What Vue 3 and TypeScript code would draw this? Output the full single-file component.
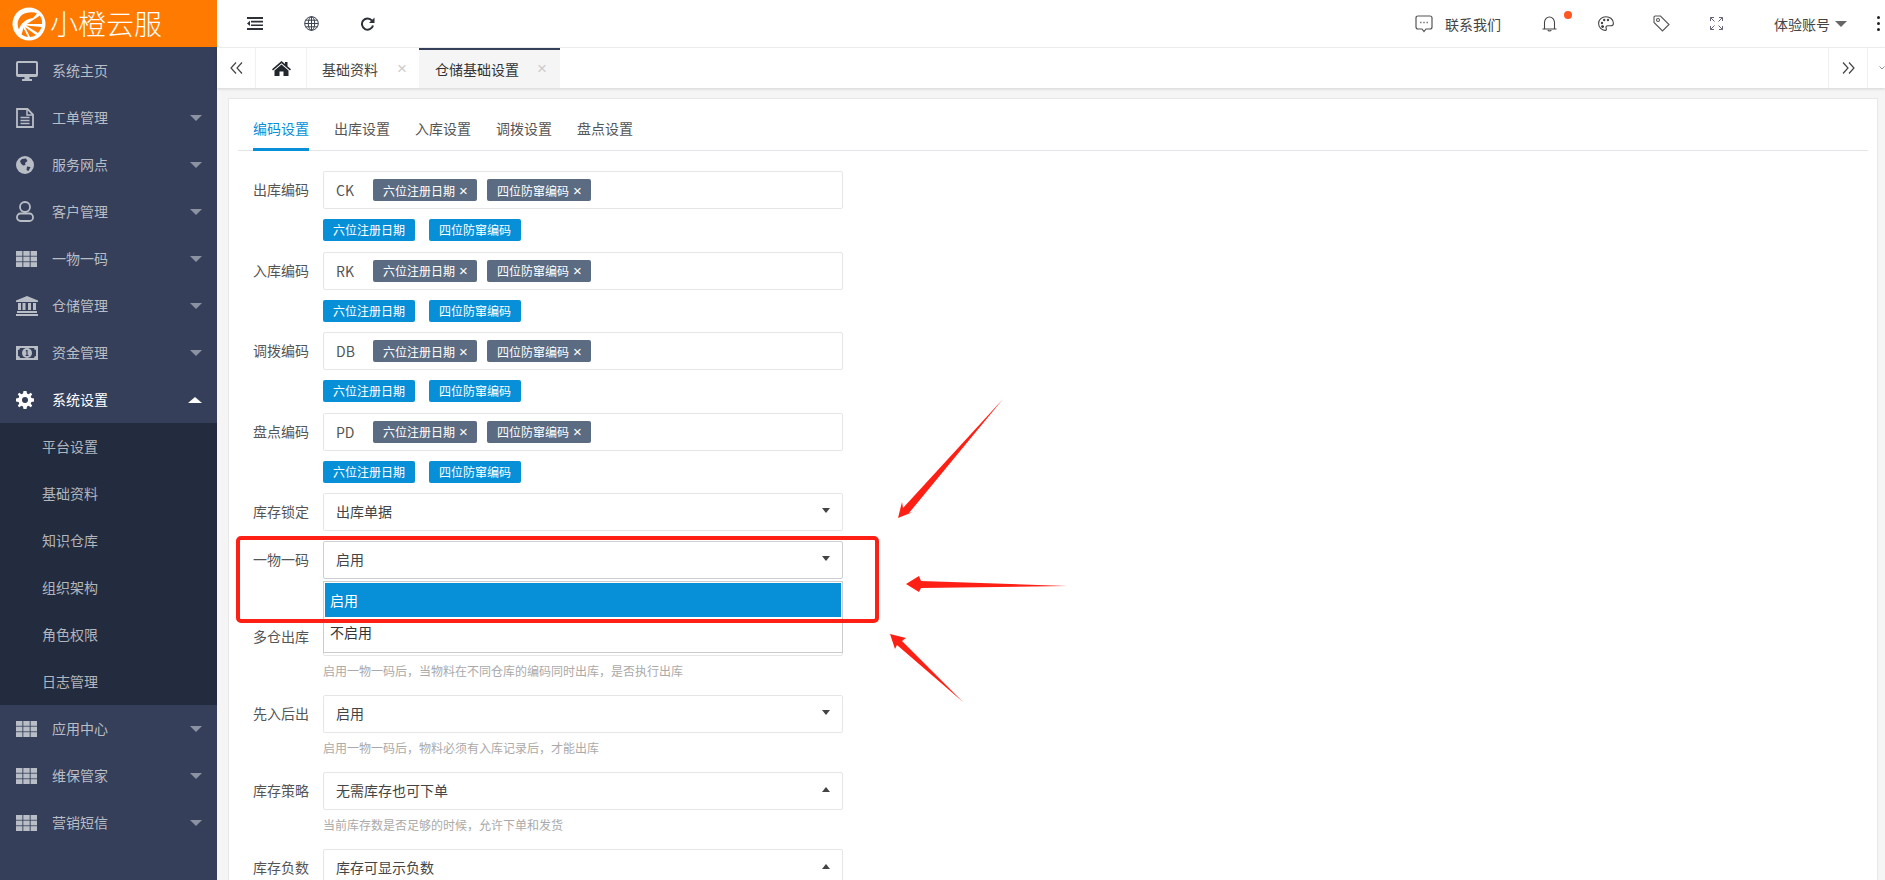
<script setup lang="ts">
interface MenuItem { label: string; icon: string; caret?: 'down' | 'up'; active?: boolean; children?: string[] }
const menu: MenuItem[] = [
  { label: '系统主页', icon: 'monitor' },
  { label: '工单管理', icon: 'doc', caret: 'down' },
  { label: '服务网点', icon: 'globe', caret: 'down' },
  { label: '客户管理', icon: 'user', caret: 'down' },
  { label: '一物一码', icon: 'grid', caret: 'down' },
  { label: '仓储管理', icon: 'bank', caret: 'down' },
  { label: '资金管理', icon: 'money', caret: 'down' },
  { label: '系统设置', icon: 'gear', caret: 'up', active: true, children: ['平台设置', '基础资料', '知识仓库', '组织架构', '角色权限', '日志管理'] },
  { label: '应用中心', icon: 'grid', caret: 'down' },
  { label: '维保管家', icon: 'grid', caret: 'down' },
  { label: '营销短信', icon: 'grid', caret: 'down' }
]
const subTabs = ['编码设置', '出库设置', '入库设置', '调拨设置', '盘点设置']
const codes = [
  { label: '出库编码', prefix: 'CK' },
  { label: '入库编码', prefix: 'RK' },
  { label: '调拨编码', prefix: 'DB' },
  { label: '盘点编码', prefix: 'PD' }
]
const gridCells: number[][] = []
for (let r = 0; r < 3; r++) for (let c = 0; c < 3; c++) gridCells.push([c * 7.3, r * 5.6])
</script>

<template>
  <div class="page">
    <aside class="side">
      <div class="logo">
        <svg class="logo-mark" width="34" height="34" viewBox="0 0 34 34">
          <circle cx="17" cy="17" r="16.5" fill="#fff" />
          <path d="M17 5.5A11.5 11.5 0 0 0 7 22.5C9 16 14 12 21 11L25 6.5A11.5 11.5 0 0 0 17 5.5Z" fill="#ff7a00" />
          <path d="M15 17 L28 8.5A13 13 0 0 1 30 17Z M14 18.5 L29.5 20A13 13 0 0 1 26 26Z M13 20 L24 28A13 13 0 0 1 18 30Z M11.5 21 L16 30A13 13 0 0 1 9.5 27.5Z" fill="#ff7a00" />
        </svg>
        <span class="logo-text">小橙云服</span>
      </div>
      <nav>
        <template v-for="item in menu" :key="item.label">
          <div class="menu-item" :class="{ active: item.active }">
            <span class="menu-icon">
              <svg v-if="item.icon === 'monitor'" width="22" height="20" viewBox="0 0 22 20">
                <path fill-rule="evenodd" d="M2 0H20Q22 0 22 2V14Q22 16 20 16H13.5V18H16V20H6V18H8.5V16H2Q0 16 0 14V2Q0 0 2 0ZM2 2V13H20V2Z" fill="currentColor" />
              </svg>
              <svg v-else-if="item.icon === 'doc'" width="18" height="20" viewBox="0 0 18 20">
                <path d="M1 1H11.5L17 6.5V19H1Z" fill="none" stroke="currentColor" stroke-width="1.8" />
                <path d="M11 1V7H17M4.5 9.5H13.5M4.5 12.5H13.5M4.5 15.5H13.5" fill="none" stroke="currentColor" stroke-width="1.5" />
              </svg>
              <svg v-else-if="item.icon === 'globe'" width="18" height="18" viewBox="0 0 18 18">
                <circle cx="9" cy="9" r="9" fill="currentColor" />
                <path d="M6 3L10 2.5 11.5 5 9 7 9.5 9 7 9.5 5 7.5 4 5ZM11 10.5L14.5 11 12.5 15 10.5 14Z" fill="#353f59" />
              </svg>
              <svg v-else-if="item.icon === 'user'" width="18" height="21" viewBox="0 0 18 21">
                <circle cx="9" cy="6" r="5" fill="none" stroke="currentColor" stroke-width="1.8" />
                <rect x="1" y="12.5" width="16" height="7.5" rx="3.5" fill="none" stroke="currentColor" stroke-width="1.8" />
              </svg>
              <svg v-else-if="item.icon === 'grid'" width="21" height="16" viewBox="0 0 21 16">
                <rect v-for="(c, i) in gridCells" :key="i" :x="c[0]" :y="c[1]" width="6.4" height="4.8" fill="currentColor" />
              </svg>
              <svg v-else-if="item.icon === 'bank'" width="22" height="20" viewBox="0 0 22 20">
                <path d="M11 0L22 4.5V6H0V4.5ZM2 7H5V14H2ZM6.5 7H9.5V14H6.5ZM12 7H15V14H12ZM17 7H20V14H17ZM1 15H21V17H1ZM0 18H22V20H0Z" fill="currentColor" />
              </svg>
              <svg v-else-if="item.icon === 'money'" width="22" height="14" viewBox="0 0 22 14">
                <path fill-rule="evenodd" d="M0 0H22V14H0ZM4 2A2 2 0 0 1 2 4V10A2 2 0 0 1 4 12H18A2 2 0 0 1 20 10V4A2 2 0 0 1 18 2Z" fill="currentColor" />
                <ellipse cx="11" cy="7" rx="5" ry="5" fill="currentColor" />
                <path d="M10 4H11.6V9H12.6V10H9.6V9H10.4V5.2H9.6Z" fill="#353f59" />
              </svg>
              <svg v-else width="18" height="18" viewBox="0 0 18 18">
                <path fill-rule="evenodd" d="M7.5 0H10.5L11 2.6 12.6 3.3 14.8 1.8 16.2 3.2 14.7 5.4 15.4 7 18 7.5V10.5L15.4 11 14.7 12.6 16.2 14.8 14.8 16.2 12.6 14.7 11 15.4 10.5 18H7.5L7 15.4 5.4 14.7 3.2 16.2 1.8 14.8 3.3 12.6 2.6 11 0 10.5V7.5L2.6 7 3.3 5.4 1.8 3.2 3.2 1.8 5.4 3.3 7 2.6ZM9 6A3 3 0 1 0 9 12 3 3 0 1 0 9 6Z" fill="currentColor" />
              </svg>
            </span>
            <span class="menu-label">{{ item.label }}</span>
            <i v-if="item.caret" class="menu-caret" :class="item.caret"></i>
          </div>
          <div v-if="item.children" class="submenu">
            <div v-for="child in item.children" :key="child" class="sub-item">{{ child }}</div>
          </div>
        </template>
      </nav>
    </aside>

    <div class="right">
      <header class="topbar">
        <div class="top-left">
          <span class="top-btn">
            <svg width="16" height="13" viewBox="0 0 16 13" fill="#2c3038">
              <path d="M0 0H16V2H0ZM4 3.8H16V5.4H4ZM4 7.4H16V9H4ZM0 11H16V13H0ZM3 3.8V9L0 6.4Z" />
            </svg>
          </span>
          <span class="top-btn">
            <svg width="15" height="15" viewBox="0 0 15 15" fill="none" stroke="#3b4252" stroke-width="1">
              <circle cx="7.5" cy="7.5" r="6.8" />
              <ellipse cx="7.5" cy="7.5" rx="3.2" ry="6.8" />
              <path d="M7.5 .7V14.3M.7 7.5H14.3M1.6 4.2H13.4M1.6 10.8H13.4" />
            </svg>
          </span>
          <span class="top-btn">
            <svg width="15" height="14" viewBox="0 0 15 14" fill="none">
              <path d="M12 3.6A5.6 5.6 0 1 0 13 8.5" stroke="#2c3038" stroke-width="2" />
              <path d="M14.5 .5V6H9Z" fill="#2c3038" />
            </svg>
          </span>
        </div>
        <div class="top-right">
          <span class="contact">
            <svg width="18" height="18" viewBox="0 0 18 18" fill="none" stroke="#555" stroke-width="1.2">
              <path d="M3 1H15Q17 1 17 3V12Q17 14 15 14H11L9 16.5 7 14H3Q1 14 1 12V3Q1 1 3 1Z" />
              <path d="M5.2 7.5H6.4M8.4 7.5H9.6M11.6 7.5H12.8" stroke-width="1.6" />
            </svg>
            <span>联系我们</span>
          </span>
          <span class="top-icon bell">
            <svg width="15" height="17" viewBox="0 0 15 17" fill="none" stroke="#444" stroke-width="1.1">
              <path d="M.5 14H14.5M2.5 14V7.5A5 5.5 0 0 1 12.5 7.5V14" />
              <path d="M5.8 15A1.8 1.6 0 0 0 9.2 15" />
            </svg>
            <i class="dot"></i>
          </span>
          <span class="top-icon">
            <svg width="16" height="15" viewBox="0 0 16 15">
              <path d="M8 .7C3.8.7.6 3.7.6 7.6S3.8 14.4 7 14.4C9 14.4 8.4 12.6 8 11.8 7.6 10.6 8.5 9.8 9.8 9.8H13C14.6 9.8 15.4 8.8 15.4 7.2 15.4 3.4 12 .7 8 .7Z" fill="none" stroke="#444" stroke-width="1.1" />
              <circle cx="4" cy="7" r="1.2" fill="#444" /><circle cx="6.2" cy="4" r="1.2" fill="#444" /><circle cx="10" cy="4" r="1.2" fill="#444" /><circle cx="4.6" cy="10.6" r="1.4" fill="#333" />
            </svg>
          </span>
          <span class="top-icon">
            <svg width="17" height="17" viewBox="0 0 17 17" fill="none" stroke="#555" stroke-width="1.1">
              <path d="M1 2.2Q1 1 2.2 1H7.5L16 9.5 9.5 16 1 7.5Z" />
              <circle cx="5" cy="5" r="1.5" />
            </svg>
          </span>
          <span class="top-icon">
            <svg width="13" height="13" viewBox="0 0 13 13" fill="none" stroke="#667" stroke-width="1">
              <path d="M.5 4V.5H4M.5 .5L4.5 4.5M9 .5H12.5V4M12.5 .5L8.5 4.5M.5 9V12.5H4M.5 12.5L4.5 8.5M9 12.5H12.5V9M12.5 12.5L8.5 8.5" />
            </svg>
          </span>
          <span class="account">体验账号<i class="acc-caret"></i></span>
          <span class="more"><i></i><i></i><i></i></span>
        </div>
      </header>

      <div class="tabbar">
        <span class="tab-btn first">
          <svg width="13" height="12" viewBox="0 0 13 12" fill="none" stroke="#444" stroke-width="1.2"><path d="M6 .5L1 6 6 11.5M12 .5L7 6 12 11.5" /></svg>
        </span>
        <span class="tab-home">
          <svg width="19" height="15" viewBox="0 0 19 15" fill="#23272e">
            <path d="M9.5 0L13 3V1H15.5V5.2L19 8.2 18 9.4 9.5 2.2 1 9.4 0 8.2ZM9.5 3.6L16.5 9.5V15H11.5V10.5H7.5V15H2.5V9.5Z" />
          </svg>
        </span>
        <span class="tab">基础资料<em>×</em></span>
        <span class="tab current">仓储基础设置<em>×</em></span>
        <span class="tab-fill"></span>
        <span class="tab-btn end">
          <svg width="13" height="12" viewBox="0 0 13 12" fill="none" stroke="#444" stroke-width="1.2"><path d="M1 .5L6 6 1 11.5M7 .5L12 6 7 11.5" /></svg>
        </span>
        <span class="tab-btn last">
          <svg width="12" height="8" viewBox="0 0 12 8" fill="none" stroke="#444" stroke-width="1.2"><path d="M1 1L6 6 11 1" /></svg>
        </span>
      </div>

      <main class="main">
        <section class="card">
          <div class="subtabs">
            <span v-for="(t, i) in subTabs" :key="t" class="subtab" :class="{ on: i === 0 }">{{ t }}</span>
          </div>
          <div class="form">
            <div v-for="c in codes" :key="c.label" class="code-block">
              <div class="field">
                <label>{{ c.label }}</label>
                <div class="box">
                  <span class="prefix">{{ c.prefix }}</span>
                  <span class="tag">六位注册日期<em>×</em></span>
                  <span class="tag">四位防窜编码<em>×</em></span>
                </div>
              </div>
              <div class="btns">
                <span class="blue">六位注册日期</span>
                <span class="blue">四位防窜编码</span>
              </div>
            </div>

            <div class="field select-row tight">
              <label>库存锁定</label>
              <div class="box sel">出库单据<i class="sel-caret"></i></div>
            </div>
            <div class="field select-row open">
              <label>一物一码</label>
              <div class="box sel dark">启用<i class="sel-caret"></i></div>
              <div class="dropdown">
                <div class="opt hi">启用</div>
                <div class="opt">不启用</div>
              </div>
            </div>
            <div class="field select-row">
              <label>多仓出库</label>
              <div class="box sel"></div>
            </div>
            <p class="hint">启用一物一码后&#xFF0C;当物料在不同仓库的编码同时出库&#xFF0C;是否执行出库</p>
            <div class="field select-row">
              <label>先入后出</label>
              <div class="box sel">启用<i class="sel-caret"></i></div>
            </div>
            <p class="hint">启用一物一码后&#xFF0C;物料必须有入库记录后&#xFF0C;才能出库</p>
            <div class="field select-row">
              <label>库存策略</label>
              <div class="box sel">无需库存也可下单<i class="sel-caret up"></i></div>
            </div>
            <p class="hint">当前库存数是否足够的时候&#xFF0C;允许下单和发货</p>
            <div class="field select-row">
              <label>库存负数</label>
              <div class="box sel">库存可显示负数<i class="sel-caret up"></i></div>
            </div>
          </div>
        </section>
      </main>
    </div>

    <svg class="marks" width="1885" height="880" viewBox="0 0 1885 880">
      <rect x="238" y="538" width="639" height="83" rx="3" fill="none" stroke="#ff2015" stroke-width="4" />
      <polygon points="1003,399 909,513 913,512 898,518 902,502 903,508" fill="#ff2015" />
      <polygon points="1067,586 921,588 919,592 906,584 919,576 921,581" fill="#ff2015" />
      <polygon points="963,702 897,645 895,649 890,634 906,638 902,641" fill="#ff2015" />
    </svg>
  </div>
</template>

<style>
html, body { margin: 0; padding: 0; overflow: hidden; }
</style>

<style scoped>
.page {
  position: relative;
  display: flex;
  width: 1885px;
  height: 880px;
  overflow: hidden;
  background: #fff;
  font-family: "Noto Sans CJK SC", "Noto Sans", sans-serif;
  font-size: 14px;
  color: #555;
}
.side { flex: 0 0 217px; background: #353f59; color: #b9bdc6; }
.logo { height: 47px; background: #ff7a00; display: flex; align-items: center; padding-left: 12px; box-sizing: border-box; }
.logo-text { margin-left: 4px; font-size: 28px; font-weight: 300; color: #fff; line-height: 47px; white-space: nowrap; }
.menu-item { position: relative; height: 47px; display: flex; align-items: center; }
.menu-item.active { color: #fff; }
.menu-icon { width: 52px; padding-left: 16px; box-sizing: border-box; display: flex; align-items: center; flex: none; }
.menu-icon svg { display: block; }
.menu-label { flex: 1; line-height: 47px; }
.menu-caret { width: 0; height: 0; margin-right: 15px; border-left: 6px solid transparent; border-right: 6px solid transparent; }
.menu-caret.down { border-top: 6px solid #8b92a1; }
.menu-caret.up { border-bottom: 6px solid #fff; border-left-width: 7px; border-right-width: 7px; }
.submenu { background: #232c3f; }
.sub-item { height: 47px; line-height: 47px; padding-left: 42px; color: #b2b5bc; }

.right { flex: 1; min-width: 0; display: flex; flex-direction: column; }
.topbar { flex: 0 0 48px; box-sizing: border-box; display: flex; justify-content: space-between; align-items: center; border-bottom: 1px solid #f2f2f2; }
.top-left { display: flex; padding-left: 10px; }
.top-btn { width: 56px; height: 47px; display: flex; align-items: center; justify-content: center; }
.top-right { display: flex; align-items: center; height: 47px; }
.contact { display: flex; align-items: center; gap: 12px; color: #444; margin-right: 38px; }
.top-icon { position: relative; display: flex; width: 20px; height: 20px; align-items: center; justify-content: center; margin-right: 35px; }
.top-icon.bell { margin-right: 37px; }
.dot { position: absolute; left: 25px; top: -3px; width: 8px; height: 8px; border-radius: 50%; background: #ff5722; }
.account { display: flex; align-items: center; color: #444; margin-left: 13px; }
.acc-caret { margin-left: 5px; width: 0; height: 0; border-left: 6px solid transparent; border-right: 6px solid transparent; border-top: 6px solid #666; }
.more { display: flex; flex-direction: column; gap: 3px; margin-left: 30px; margin-right: 5px; }
.more i { width: 3px; height: 3px; background: #222; border-radius: 50%; }

.tabbar { flex: 0 0 40px; box-sizing: border-box; display: flex; align-items: stretch; background: #fff; box-shadow: 0 1px 3px rgba(0, 0, 0, .14); position: relative; z-index: 1; }
.tab-btn { display: flex; align-items: center; justify-content: center; }
.tab-btn.first { width: 39px; border-right: 1px solid #f0f0f0; box-sizing: border-box; }
.tab-btn.end { width: 40px; border-left: 1px solid #f0f0f0; border-right: 1px solid #f0f0f0; box-sizing: border-box; }
.tab-btn.last { width: 17px; justify-content: flex-start; padding-left: 11px; box-sizing: border-box; }
.tab-home { width: 51px; display: flex; align-items: center; justify-content: center; border-right: 1px solid #f0f0f0; box-sizing: border-box; }
.tab { display: flex; align-items: center; padding: 0 0 0 15px; color: #444; box-sizing: border-box; width: 112px; border-top: 2px solid transparent; white-space: nowrap; }
.tab em { font-style: normal; color: #ccc; font-size: 17px; margin-left: 19px; font-family: "Liberation Sans", sans-serif; }
.tab.current { width: 141px; background: #f5f5f5; border-top-color: #353f59; color: #333; padding-left: 16px; }
.tab.current em { margin-left: 18px; }
.tab-fill { flex: 1; }

.main { flex: 1; min-height: 0; background: #f5f5f5; padding: 10px 7px 0 11px; overflow: hidden; }
.card { height: 100%; background: #fff; border: 1px solid #e8e8e8; border-bottom: 0; box-sizing: border-box; padding: 0 9px; overflow: hidden; }
.subtabs { display: flex; height: 52px; border-bottom: 1px solid #e4e5e8; padding-left: 15px; box-sizing: border-box; }
.subtab { width: 56px; margin-right: 25px; height: 52px; line-height: 59px; box-sizing: border-box; color: #555; white-space: nowrap; }
.subtab.on { color: #078fd8; border-bottom: 3px solid #078fd8; }
.form { padding: 20px 0 0 15px; }
.field { position: relative; display: flex; align-items: center; height: 38px; }
.field label { width: 56px; margin-right: 14px; padding-bottom: 2px; white-space: nowrap; color: #555; }
.box { width: 520px; height: 38px; box-sizing: border-box; border: 1px solid #e4e6e8; border-radius: 2px; display: flex; align-items: center; padding-left: 12px; background: #fff; color: #444; position: relative; }
.select-row label { padding-bottom: 3px; }
.box.sel { padding-bottom: 3px; }
.code-block { margin-bottom: 10.5px; }
.prefix { width: 37px; color: #555; }
.tag { display: flex; align-items: center; height: 22px; width: 104px; padding-left: 10px; box-sizing: border-box; margin-right: 10px; border-radius: 2px; background: #5b6b82; color: #fff; font-size: 12px; white-space: nowrap; }
.tag em { font-style: normal; font-size: 15px; margin-left: 4px; font-family: "Liberation Sans", sans-serif; }
.btns { display: flex; gap: 14px; margin: 10px 0 0 70px; }
.blue { width: 92px; height: 22px; line-height: 22px; text-align: center; background: #078fd8; color: #fff; font-size: 12px; border-radius: 2px; }
.select-row.tight { margin-bottom: 10px; }
.select-row.open { margin-bottom: 39px; z-index: 2; }
.box.dark { border-color: #ccd0d4; }
.sel-caret { position: absolute; right: 12px; top: 14px; width: 0; height: 0; border-left: 4px solid transparent; border-right: 4px solid transparent; border-top: 5px solid #444; }
.sel-caret.up { border-top: 0; border-bottom: 5px solid #444; }
.dropdown { position: absolute; left: 70px; top: 40px; width: 520px; height: 72px; box-sizing: border-box; border: 1px solid #ccc; padding: 1px; background: #fff; }
.opt { height: 34px; line-height: 30px; padding-left: 5px; color: #333; }
.opt.hi { height: 34px; line-height: 34px; background: #078fd8; color: #fff; }
.hint { margin: 6px 0 0 70px; height: 33px; line-height: 17px; font-size: 12px; color: #aaa; }
.marks { position: absolute; left: 0; top: 0; pointer-events: none; z-index: 5; }
</style>
